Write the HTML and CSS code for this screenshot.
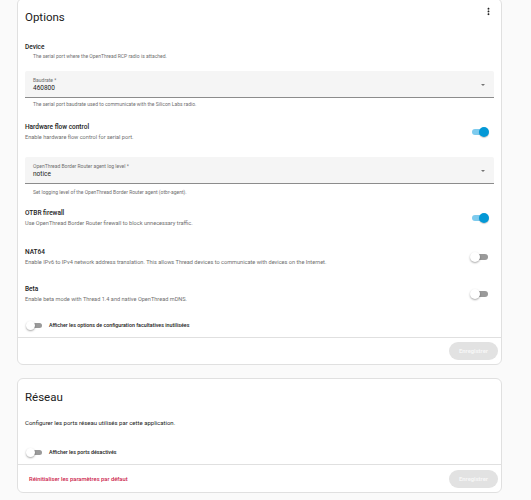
FILE: index.html
```html
<!DOCTYPE html>
<html>

<head>
    <meta charset="UTF-8">
    <title>Options</title>
    <link rel="stylesheet" href="styles.css">
</head>

<body>
    <div class="page">
        <div class="card">
            <div class="card-header">
                <h2>Options</h2>
                <svg class="menu-icon" viewBox="0 0 24 24">
                    <path d="M12 8c1.1 0 2-.9 2-2s-.9-2-2-2-2 .9-2 2 .9 2 2 2zm0 2c-1.1 0-2 .9-2 2s.9 2 2 2 2-.9 2-2-.9-2-2-2zm0 6c-1.1 0-2 .9-2 2s.9 2 2 2 2-.9 2-2-.9-2-2-2z" />
                </svg>
            </div>

            <div class="card-content">
                <div class="field-group">
                    <div class="item-title">Device</div>
                    <div class="helper indent">The serial port where the OpenThread RCP radio is attached.</div>
                </div>

                <div class="select first">
                    <div class="select-text">
                        <span class="select-label">Baudrate *</span>
                        <span class="select-value">460800</span>
                    </div>
                    <span class="select-arrow"></span>
                </div>
                <div class="helper indent after-select">The serial port baudrate used to communicate with the Silicon Labs radio.</div>

                <div class="setting-row hw">
                    <div>
                        <div class="item-title">Hardware flow control</div>
                        <div class="item-desc">Enable hardware flow control for serial port.</div>
                    </div>
                    <span class="switch on"></span>
                </div>

                <div class="select second">
                    <div class="select-text">
                        <span class="select-label">OpenThread Border Router agent log level *</span>
                        <span class="select-value">notice</span>
                    </div>
                    <span class="select-arrow"></span>
                </div>
                <div class="helper indent after-select log-helper">Set logging level of the OpenThread Border Router agent (otbr-agent).</div>

                <div class="setting-row otbr">
                    <div>
                        <div class="item-title">OTBR firewall</div>
                        <div class="item-desc">Use OpenThread Border Router firewall to block unnecessary traffic.</div>
                    </div>
                    <span class="switch on"></span>
                </div>

                <div class="setting-row nat">
                    <div>
                        <div class="item-title">NAT64</div>
                        <div class="item-desc">Enable IPv6 to IPv4 network address translation. This allows Thread devices to communicate with devices on the Internet.</div>
                    </div>
                    <span class="switch"></span>
                </div>

                <div class="setting-row beta">
                    <div>
                        <div class="item-title">Beta</div>
                        <div class="item-desc">Enable beta mode with Thread 1.4 and native OpenThread mDNS.</div>
                    </div>
                    <span class="switch"></span>
                </div>

                <div class="show-row options-toggle">
                    <span class="switch small"></span>
                    <span class="show-label">Afficher les options de configuration facultatives inutilisées</span>
                </div>
            </div>

            <div class="card-actions">
                <span></span>
                <button class="save-btn" disabled>Enregistrer</button>
            </div>
        </div>

        <div class="card network">
            <div class="card-header">
                <h2>Réseau</h2>
            </div>

            <div class="card-content">
                <div class="network-desc">Configurer les ports réseau utilisés par cette application.</div>

                <div class="show-row ports-toggle">
                    <span class="switch small"></span>
                    <span class="show-label">Afficher les ports désactivés</span>
                </div>
            </div>

            <div class="card-actions">
                <button class="reset-btn">Réinitialiser les paramètres par défaut</button>
                <button class="save-btn" disabled>Enregistrer</button>
            </div>
        </div>
    </div>
</body>

</html>
```

FILE: styles.css
```css
body {
    font-family: 'Roboto', 'Noto Sans', sans-serif;
    margin: 0;
    padding: 0;
    background: #FAFAFA;
    color: #212121;
}

.page {
    margin-top: -2px;
    padding: 0 29px 0 17px;
}

.card {
    background: #FFFFFF;
    border: 1px solid #E0E0E0;
    border-radius: 6px;
}

.card.network {
    margin-top: 13px;
}

.card-header {
    display: flex;
    justify-content: space-between;
    align-items: flex-start;
    height: 36px;
    padding: 0 7px 0 7px;
}

.card-header h2 {
    margin: 0;
    font-size: 11.5px;
    font-weight: 400;
    line-height: 36px;
    color: #212121;
}

.menu-icon {
    width: 11px;
    height: 11px;
    margin-top: 7px;
    fill: #212121;
}

.card-content {
    padding: 8px 7px 6px 7px;
}

.network .card-content {
    padding-top: 3px;
}

.item-title {
    font-size: 6.5px;
    font-weight: 500;
    line-height: 9px;
    color: #212121;
}

.item-desc {
    font-size: 5.6px;
    line-height: 10px;
    color: #6F6F6F;
}

.setting-row .item-title {
    line-height: 10px;
}

.helper {
    font-size: 5px;
    line-height: 9px;
    color: #6F6F6F;
}

.helper.indent {
    padding-left: 8px;
}

.helper.after-select {
    line-height: 8px;
    margin-top: 2px;
}

.helper.log-helper {
    margin-top: 4px;
}

.select {
    display: flex;
    justify-content: space-between;
    align-items: center;
    height: 26px;
    background: #F5F5F5;
    border-bottom: 1px solid #8C8C8C;
    border-radius: 2px 2px 0 0;
    padding: 0 9px 0 8px;
}

.select.first {
    margin-top: 10px;
}

.select.second {
    margin-top: 15px;
}

.select-text {
    display: flex;
    flex-direction: column;
    padding-top: 1px;
}

.select-label {
    font-size: 5px;
    line-height: 8px;
    color: #6F6F6F;
}

.select-value {
    font-size: 6.5px;
    line-height: 9px;
    color: #212121;
}

.select-arrow {
    width: 0;
    height: 0;
    border-left: 2px solid transparent;
    border-right: 2px solid transparent;
    border-top: 2px solid #757575;
    margin-top: 1px;
}

.setting-row {
    display: flex;
    justify-content: space-between;
    align-items: center;
    padding-right: 5px;
}

.setting-row.hw {
    margin-top: 14px;
}

.setting-row.otbr {
    margin-top: 12px;
}

.setting-row.nat {
    margin-top: 19px;
}

.setting-row.beta {
    margin-top: 17px;
}

.switch {
    position: relative;
    display: inline-block;
    width: 19px;
    height: 10px;
    flex-shrink: 0;
}

.switch::before {
    content: '';
    position: absolute;
    left: 2px;
    right: 1px;
    top: 2px;
    height: 6px;
    border-radius: 3px;
    background: #9A9A9A;
}

.switch::after {
    content: '';
    position: absolute;
    left: 0;
    top: 0;
    width: 10px;
    height: 10px;
    border-radius: 50%;
    background: #FFFFFF;
    box-shadow: 0 1px 2px rgba(0, 0, 0, 0.35);
}

.switch.on::before {
    background: #7ECBEE;
}

.switch.on::after {
    left: auto;
    right: 0;
    background: #0398D6;
    box-shadow: 0 1px 1px rgba(0, 0, 0, 0.2);
}

.switch.small {
    width: 17px;
    height: 9px;
}

.switch.small::before {
    top: 2px;
    height: 5px;
}

.switch.small::after {
    width: 9px;
    height: 9px;
}

.show-row {
    display: flex;
    align-items: center;
    gap: 6px;
    height: 12px;
    padding-left: 1px;
}

.show-row.options-toggle {
    margin-top: 15px;
}

.show-row.ports-toggle {
    margin-top: 18px;
}

.show-label {
    font-size: 5.3px;
    font-weight: 500;
    color: #212121;
}

.network-desc {
    font-size: 6px;
    line-height: 10px;
    color: #212121;
}

.card-actions {
    display: flex;
    justify-content: space-between;
    align-items: center;
    border-top: 1px solid #E0E0E0;
    padding: 4px 3px 4px 3px;
}

.network .card-actions {
    padding-top: 5px;
}

button {
    font-family: 'Roboto', 'Noto Sans', sans-serif;
    border: none;
    background: none;
    padding: 0;
}

.save-btn {
    height: 18px;
    width: 49px;
    border-radius: 9999px;
    background: #E2E2E2;
    color: #F7F7F7;
    font-size: 5.8px;
    font-weight: 700;
}

.reset-btn {
    font-size: 5.8px;
    font-weight: 500;
    color: #CC1A4A;
    padding: 0 8px;
    height: 18px;
}
```
